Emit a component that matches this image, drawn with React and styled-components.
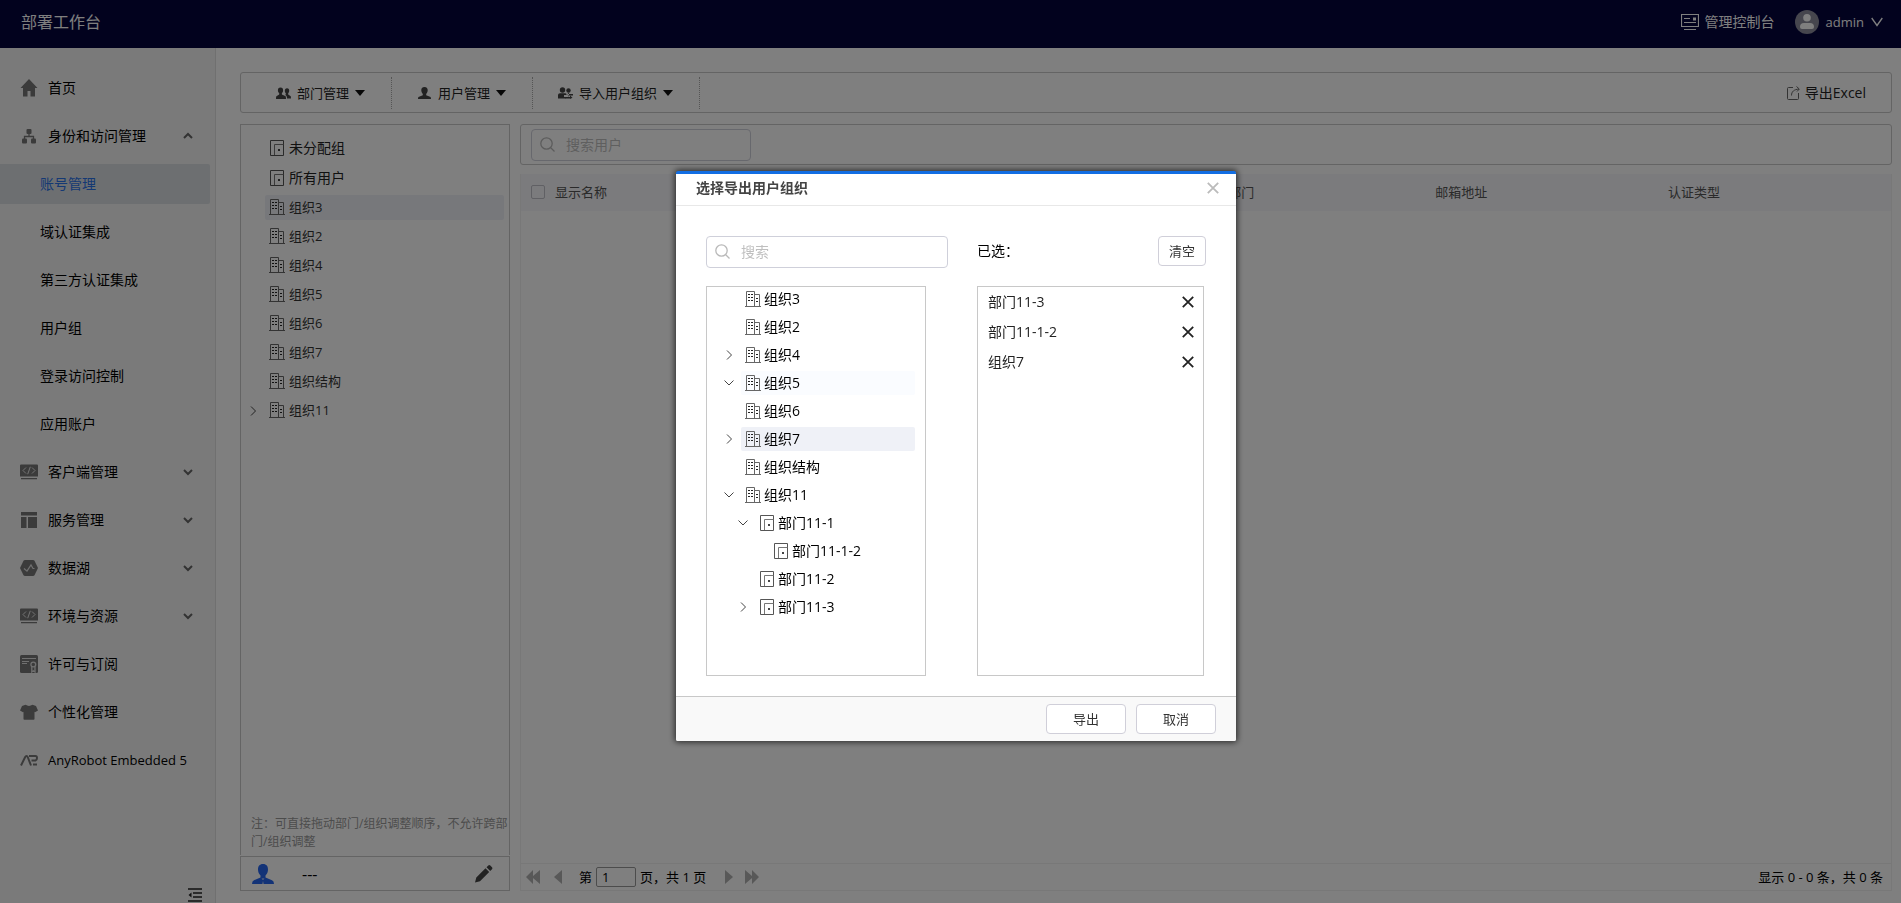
import React from "react";
import styled, { createGlobalStyle, css } from "styled-components";

const GlobalStyle = createGlobalStyle`
  *, *::before, *::after { box-sizing: border-box; }
  body {
    margin: 0;
    background: #fff;
    color: #000;
    font-family: "Open Sans", "Noto Sans CJK SC", sans-serif;
    font-size: 14px;
    line-height: 20px;
  }
  button, input { font: inherit; color: inherit; margin: 0; }
  button { padding: 0; border: 0; background: none; cursor: pointer; white-space: nowrap; }
  ul { list-style: none; margin: 0; padding: 0; }
  a { color: inherit; text-decoration: none; }
  svg { display: block; flex: none; }
`;

/* ---------- icons ---------- */

const BuildingIcon = () => (
  <svg width="16" height="16" viewBox="0 0 16 16" fill="none" stroke="#666">
    <path d="M1.500 15.500V.5h8v15M9.500 3.500h5v12M0 15.500h16" />
    <path d="M3 3.500h2M6 3.500h2M3 6.500h2M6 6.500h2M3 9.500h2M6 9.500h2M11 7.500h2M11 10.500h2" stroke="#222" />
  </svg>
);

const DoorIcon = () => (
  <svg width="16" height="16" viewBox="0 0 16 16" fill="none" stroke="#555">
    <path d="M1.500 .5h13v15h-13z" />
    <path d="M5.500 15V4.500h9" stroke="#777" />
    <rect x="9" y="9" width="2" height="2" fill="#444" stroke="none" />
  </svg>
);

const Arrow = ({ open }) => (
  <svg width="10" height="10" viewBox="0 0 10 10" fill="none" stroke="#444">
    <path d={open ? "M.5 2.500 5 7l4.500-4.500" : "M3 .5 7.500 5 3 9.500"} />
  </svg>
);

const MenuArrow = ({ up }) => (
  <svg width="10" height="8" viewBox="0 0 10 8" fill="none" stroke="#666" strokeWidth="2">
    <path d={up ? "M1 6l4-4 4 4" : "M1 2l4 4 4-4"} />
  </svg>
);

const Caret = () => (
  <svg width="10" height="6" viewBox="0 0 10 6">
    <path d="M0 0h10L5 6z" fill="#111" />
  </svg>
);

const SearchIcon = () => (
  <svg width="16" height="16" viewBox="0 0 16 16" fill="none" stroke="#b9b9b9" strokeWidth="1.300">
    <circle cx="6.500" cy="6.500" r="5.700" />
    <path d="M10.500 10.500l4 4" />
  </svg>
);

const CrossIcon = ({ color }) => (
  <svg width="12" height="12" viewBox="0 0 12 12" fill="none" stroke={color} strokeWidth="1.800">
    <path d="M.8.8l10.400 10.400M11.200.8.8 11.200" />
  </svg>
);

const HomeIcon = () => (
  <svg width="18" height="18" viewBox="0 0 18 18" fill="#777">
    <path d="M9 0 .5 9H3v8.500h4.500V12h3v5.500H15V9h2.500z" />
  </svg>
);

const TreeIcon = () => (
  <svg width="18" height="18" viewBox="0 0 18 18" fill="#777">
    <rect x="6.500" y="2" width="5" height="5" rx="1" />
    <rect x="2" y="11.500" width="5" height="5" rx="1" />
    <rect x="11" y="11.500" width="5" height="5" rx="1" />
    <path d="M9 6v3.500M4.500 12V9.500h9V12" fill="none" stroke="#777" strokeWidth="1.300" />
  </svg>
);

const CodeIcon = () => (
  <svg width="18" height="18" viewBox="0 0 18 18">
    <path d="M1 1.500h16a1 1 0 0 1 1 1v11H0v-11a1 1 0 0 1 1-1zM1 15h16v1.300H1z" fill="#777" />
    <path d="M6 4.500 3 7.500l3 3M12 4.500l3 3-3 3M10.300 3.800 7.700 11.200" fill="none" stroke="#e8e8e8" />
  </svg>
);

const LayoutIcon = () => (
  <svg width="18" height="18" viewBox="0 0 18 18" fill="#777">
    <path d="M1 1h16v3.500H1zM1 6h5.500v11H1zM8 6h9v11H8z" />
  </svg>
);

const LakeIcon = () => (
  <svg width="18" height="18" viewBox="0 0 18 18">
    <path d="M5 1h8q1 0 1.500.8L18 9l-3.500 7.200q-.5.8-1.500.8H5q-1 0-1.500-.8L0 9l3.500-7.200Q4 1 5 1z" fill="#777" />
    <path d="M4 9.500l3 2.700 4-6.200 2 3.500h1.500" fill="none" stroke="#e0e0e0" strokeWidth="1.200" />
  </svg>
);

const LicenseIcon = () => (
  <svg width="18" height="18" viewBox="0 0 18 18">
    <rect width="18" height="18" rx="1.500" fill="#777" />
    <path d="M2 3.500h14M2 6.500h7M2 8.500h5" stroke="#e0e0e0" />
    <circle cx="13.300" cy="9.500" r="2.400" fill="none" stroke="#e0e0e0" strokeWidth="1.300" />
    <path d="M11.800 11.500V17l1.600-1.200L15 17v-5.500" fill="none" stroke="#e0e0e0" strokeWidth="1.300" />
  </svg>
);

const ShirtIcon = () => (
  <svg width="18" height="18" viewBox="0 0 18 18" fill="#777">
    <path d="M5.500 1.800Q9 4 12.500 1.800L16 3l2 4.500-3 1.700-.5-.4V16q0 .8-.8.8H4.300q-.8 0-.8-.8V8.800l-.5.400L0 7.500 2 3z" />
  </svg>
);

const RobotIcon = () => (
  <svg width="18" height="18" viewBox="0 0 18 18" fill="none" stroke="#777" strokeWidth="2">
    <path d="M1 14.500 5.200 6q.5-1 1.300-1t1.200 1L11 14.500" />
    <path d="M9 5h6.500Q17 5 17 7t-1.500 2.500H11.500" />
    <path d="M13 13.500h4" />
  </svg>
);

const CollapseIcon = () => (
  <svg width="14" height="14" viewBox="0 0 14 14" fill="none" stroke="#222" strokeWidth="1.300">
    <path d="M0 1h14M5 5h9M5 9h9M0 13h14" />
    <path d="M3.500 4.500v5L.5 7z" fill="#222" stroke="none" />
  </svg>
);

const UserIcon = () => (
  <svg width="15" height="12" viewBox="0 0 15 12" fill="#444">
    <path d="M7.500 0c2.300 0 3.300 1.500 3.200 3.500-.1 1.600-.8 2.700-1.500 3.400v1.300L13 9.800c.8.400 1 1.100 1 2.200H1c0-1.100.2-1.800 1-2.200l3.800-1.600V6.900C5.100 6.200 4.400 5.100 4.300 3.500 4.200 1.500 5.200 0 7.500 0z" />
  </svg>
);

const UsersIcon = () => (
  <svg width="15" height="12" viewBox="0 0 15 12" fill="#444">
    <path d="M4.500.5c1.900 0 2.700 1.200 2.600 2.900 0 1.300-.6 2.100-1.200 2.700v1.500l3.300 1.500c.6.300.8.900.8 2.900H0c0-2 .2-2.600.8-2.900l2.400-1.500V6.100C2.500 5.500 2 4.700 1.900 3.400 1.900 1.700 2.600.5 4.500.5z" />
    <path d="M11 1.300c1.600 0 2.300 1 2.200 2.500 0 1.200-.5 1.900-1 2.400v1.300l2.200 1.400c.5.300.6 1 .6 2.600h-4c0-1.900-.4-2.900-2-3.700l.8-.4V6.200c-.6-.5-1-1.200-1-2.400C8.800 2.300 9.500 1.300 11 1.300z" />
  </svg>
);

const ImportIcon = () => (
  <svg width="15" height="12" viewBox="0 0 15 12" fill="#444">
    <circle cx="4.500" cy="3" r="2.700" />
    <path d="M0 11.500V8q0-1.800 2-1.800h5q1.500 0 1.500 1.300V8H6v2h2v1.500z" />
    <circle cx="10.500" cy="3.500" r="2.200" />
    <path d="M9.500 7h5.500v1.500H9.500zM7.500 10h5v1.500h-5zM11 5.500l-2 2.200 2 2zM12 8.500l2.500 2.300L12 12z" />
  </svg>
);

const ExportIcon = () => (
  <svg width="13" height="14" viewBox="0 0 13 14" fill="none" stroke="#666">
    <path d="M6 1.500H1.500q-1 0-1 1v10q0 1 1 1h9q1 0 1-1V7M4.500 9.500C4.500 5.500 7 3.500 12 3M9.500.5 12.300 3 10 5.500" />
  </svg>
);

const ConsoleIcon = () => (
  <svg width="18" height="16" viewBox="0 0 18 16" fill="none" stroke="#fff">
    <path d="M.5.500h17v12H.5z" strokeWidth="1.200" />
    <path d="M3 4.500h6M3 8.500h12M3 15.500h12" strokeWidth="1.200" />
    <path d="M12 3.500h3v3h-3z" fill="#fff" stroke="none" />
  </svg>
);

const AvatarIcon = () => (
  <svg width="24" height="24" viewBox="0 0 24 24">
    <circle cx="12" cy="12" r="12" fill="#8c8c9c" />
    <circle cx="12" cy="7.800" r="3.800" fill="#fff" />
    <path d="M5 17q0-4 4-4h6q4 0 4 4 0 2-2 2H7q-2 0-2-2z" fill="#fff" />
  </svg>
);

const ChevronDown = () => (
  <svg width="12" height="10" viewBox="0 0 12 10" fill="none" stroke="#fff" strokeWidth="1.300">
    <path d="M.7 1 6 8.500 11.300 1" />
  </svg>
);

const BlueUserIcon = () => (
  <svg width="22" height="20" viewBox="0 0 22 20">
    <path d="M11 0c3.500 0 5 2.300 5 5.500 0 2.500-1 4.600-2.500 6v2l6.500 2.700q2 .8 2 3.800H0q0-3 2-3.800l6.500-2.700v-2C7 10.100 6 8 6 5.500 6 2.300 7.500 0 11 0z" fill="#2766ee" />
    <path d="M9.500 14.500 11 16l1.500-1.500M10.300 20l.7-3 .7 3z" fill="#d8e0f5" />
  </svg>
);

const PencilIcon = () => (
  <svg width="18" height="18" viewBox="0 0 18 18" fill="#444">
    <path d="M0 17.500l1.300-5L10.500 3.300l3.700 3.700L5 16.200zM11.500 2.300 13.300.5q1-.8 2 0l1.700 1.700q.8 1 0 2L15.200 6z" />
  </svg>
);

const PageIcon = ({ double, forward }) => (
  <svg width={double ? 14 : 8} height="14" viewBox={double ? "0 0 14 14" : "0 0 8 14"} fill="#b0b0b0">
    {!double && <path d={forward ? "M0 0l8 7-8 7z" : "M8 0 0 7l8 7z"} />}
    {double && <path d={forward ? "M0 0l7 6V0l7 7-7 7V8l-7 6z" : "M14 0 7 6V0L0 7l7 7V8l7 6z"} />}
  </svg>
);

/* ---------- page frame ---------- */

const Page = styled.div`
  display: flex;
  flex-direction: column;
  min-height: 100vh;
`;

const TopBar = styled.header`
  display: flex;
  align-items: center;
  justify-content: space-between;
  height: 48px;
  padding: 0 18px 4px 21px;
  background: #04043c;
  color: #fff;
`;

const Brand = styled.h1`
  margin: 0;
  font-size: 16px;
  font-weight: 400;
`;

const TopLinks = styled.div`
  display: flex;
  align-items: center;
  gap: 20px;
`;

const TopLink = styled.a`
  display: flex;
  align-items: center;
  gap: 6px;
`;

const Account = styled.button`
  display: flex;
  align-items: center;
  gap: 7px;
  font-size: 13px;
`;

const Body = styled.div`
  display: flex;
  flex: 1;
`;

const Sidebar = styled.nav`
  display: flex;
  flex-direction: column;
  justify-content: space-between;
  flex: none;
  width: 216px;
  padding: 20px 5px 1px 0;
  border-right: 1px solid #e0e0e0;
  background: #f5f5f5;
`;

const MenuList = styled.div`
  display: flex;
  flex-direction: column;
  gap: 8px;
`;

const MenuLink = styled.a`
  display: flex;
  align-items: center;
  gap: 10px;
  height: 40px;
  padding: 0 17px 0 ${(p) => (p.$sub ? 40 : 20)}px;
  border-radius: 0 2px 2px 0;
  font-size: ${(p) => (p.$latin ? 13 : 14)}px;
  ${(p) => p.$active && css`background: #dbdee2; color: #2a72e8;`}
`;

const MenuLabel = styled.span`
  flex: 1;
  white-space: nowrap;
`;

const CollapseButton = styled.button`
  align-self: flex-end;
  margin-right: 8px;
`;

const Main = styled.main`
  display: flex;
  flex-direction: column;
  flex: 1;
  gap: 11px;
  min-width: 0;
  padding: 24px 9px 12px 24px;
`;

const Toolbar = styled.div`
  display: flex;
  align-items: center;
  height: 41px;
  padding-left: 10px;
  border: 1px solid #c8c8c8;
  border-radius: 3px;
`;

const ToolButton = styled.button`
  display: flex;
  align-items: center;
  gap: 6px;
  height: 32px;
  padding: 0 26px 0 25px;
  border-right: 1px dotted #aaa;
  font-size: 13px;
  color: #222;
`;

const ExportButton = styled.button`
  display: flex;
  align-items: center;
  gap: 5px;
  margin-left: auto;
  padding-right: 25px;
  color: #222;
`;

const Columns = styled.div`
  display: flex;
  flex: 1;
  gap: 10px;
`;

/* ---------- organisation panel ---------- */

const OrgPanel = styled.section`
  display: flex;
  flex-direction: column;
  flex: none;
  gap: 1px;
  width: 270px;
`;

const OrgBox = styled.div`
  display: flex;
  flex-direction: column;
  flex: 1;
  padding-top: 8px;
  border: 1px solid #c8c8c8;
  border-bottom: 0;
`;

const GroupRow = styled.li`
  display: flex;
  align-items: center;
  gap: 4px;
  height: 30px;
  padding-left: 28px;
  color: #222;
`;

const OrgList = styled.ul`
  display: flex;
  flex-direction: column;
  gap: 4px;
  padding: 2px 5px 0 7px;
`;

const TreeRow = styled.li`
  display: flex;
  align-items: center;
  height: ${(p) => (p.$compact ? 24 : 25)}px;
  padding-left: ${(p) => p.$level * 14}px;
`;

const Toggle = styled.span`
  flex: none;
  width: 17px;
`;

const NodeButton = styled.button`
  display: flex;
  align-items: center;
  flex: 1;
  gap: ${(p) => (p.$compact ? 3 : 4)}px;
  height: 100%;
  padding: 0 0 ${(p) => (p.$compact ? 0 : 1)}px 4px;
  border-radius: 2px;
  background: ${(p) => (p.$selected ? "#eff1f7" : p.$hover ? "#fafcff" : "none")};
  font-size: ${(p) => (p.$compact ? 14 : 13)}px;
  color: ${(p) => (p.$compact ? "#000" : "#333")};
`;

const Note = styled.p`
  margin: auto 0 0;
  padding: 0 0 4px 10px;
  font-size: 12px;
  line-height: 18px;
  color: #999;
`;

const OwnerBar = styled.div`
  display: flex;
  align-items: center;
  height: 35px;
  padding: 0 16px 0 11px;
  border: 1px solid #c8c8c8;
`;

const OwnerName = styled.span`
  flex: 1;
  padding-left: 28px;
  font-size: 16px;
`;

/* ---------- user panel ---------- */

const UserPanel = styled.section`
  display: flex;
  flex-direction: column;
  flex: 1;
  gap: 9px;
  min-width: 0;
`;

const FilterBar = styled.div`
  display: flex;
  height: 41px;
  padding: 4px 10px 3px;
  border: 1px solid #c8c8c8;
  border-radius: 3px;
`;

const SearchBox = styled.label`
  display: flex;
  align-items: center;
  gap: 10px;
  width: ${(p) => p.$width}px;
  height: 32px;
  padding: 0 8px;
  border: 1px solid #cfd0da;
  border-radius: 4px;
  background: #fff;
`;

const SearchInput = styled.input`
  flex: 1;
  min-width: 0;
  padding: 0;
  border: 0;
  outline: 0;
  background: none;
  &::placeholder { color: #bfbfbf; opacity: 1; }
`;

const TableBox = styled.div`
  display: flex;
  flex-direction: column;
  justify-content: space-between;
  flex: 1;
  border: 1px solid #f0f0f0;
  border-top: 0;
`;

const Table = styled.table`
  width: 100%;
  table-layout: fixed;
  border-collapse: collapse;
`;

const HeadCell = styled.th`
  width: ${(p) => p.$width || "auto"};
  height: 37px;
  padding: 0 0 2px 10px;
  background: #f6f6fa;
  font-size: 13px;
  font-weight: 400;
  text-align: left;
  color: #555;
`;

const Checkbox = styled.input`
  display: block;
  appearance: none;
  width: 14px;
  height: 14px;
  border: 1px solid #c0c0c8;
  border-radius: 2px;
`;

const Pager = styled.div`
  display: flex;
  align-items: center;
  height: 27px;
  padding: 0 8px 0 5px;
  border-top: 1px solid #f0f0f0;
  font-size: 13px;
`;

const PagerGroup = styled.div`
  display: flex;
  gap: ${(p) => p.$gap}px;
`;

const PageField = styled.label`
  display: flex;
  align-items: center;
  gap: 4px;
  margin: 0 19px 0 17px;
`;

const PageInput = styled.input`
  width: 40px;
  height: 20px;
  padding: 0 5px;
  border: 1px solid #999;
  border-radius: 2px;
  background: none;
`;

const Total = styled.span`
  margin-left: auto;
`;

/* ---------- dialog ---------- */

const Mask = styled.div`
  position: fixed;
  inset: 0;
  display: flex;
  align-items: center;
  justify-content: center;
  padding: 9px 0 0 11px;
  background: rgba(0, 0, 0, 0.5);
`;

const Dialog = styled.div`
  width: 560px;
  border-top: 3px solid #126ee3;
  border-radius: 2px;
  background: #fff;
  box-shadow: 0 0 6px 1px rgba(0, 0, 0, 0.7);
`;

const DialogHead = styled.div`
  display: flex;
  align-items: center;
  justify-content: space-between;
  height: 32px;
  padding: 0 17px 4px 20px;
  border-bottom: 1px solid #e8e8e8;
`;

const DialogTitle = styled.h2`
  margin: 0;
  font-size: 14px;
  font-weight: 600;
  color: #444;
`;

const DialogBody = styled.div`
  display: flex;
  gap: 29px;
  padding: 30px 30px 20px;
`;

const Side = styled.div`
  display: flex;
  flex-direction: column;
  gap: 18px;
  width: ${(p) => p.$width}px;
`;

const SideHead = styled.div`
  display: flex;
  justify-content: space-between;
  height: 32px;
  line-height: 30px;
`;

const ListBox = styled.ul`
  display: flex;
  flex-direction: column;
  gap: ${(p) => p.$gap || 0}px;
  width: ${(p) => p.$width}px;
  height: 390px;
  overflow: auto;
  border: 1px solid #c8c8c8;
`;

const PickerRow = styled(TreeRow)`
  margin: 0 10px 0 17px;
`;

const ChosenRow = styled.li`
  display: flex;
  align-items: center;
  justify-content: space-between;
  height: 30px;
  padding: 0 9px 0 10px;
  color: #222;
`;

const Button = styled.button`
  width: ${(p) => p.$width}px;
  height: 30px;
  border: 1px solid #d0cfd9;
  border-radius: 4px;
  background: #fff;
  font-size: 13px;
  line-height: 28px;
  color: #333;
`;

const DialogFoot = styled.div`
  display: flex;
  justify-content: flex-end;
  gap: 10px;
  padding: 7px 20px;
  border-top: 1px solid #c8c8c8;
  border-radius: 0 0 2px 2px;
  background: #f9f9f9;
`;

/* ---------- data ---------- */

const menu = [
  { label: "首页", Icon: HomeIcon },
  { label: "身份和访问管理", Icon: TreeIcon, arrow: "up" },
  { label: "账号管理", active: true },
  { label: "域认证集成" },
  { label: "第三方认证集成" },
  { label: "用户组" },
  { label: "登录访问控制" },
  { label: "应用账户" },
  { label: "客户端管理", Icon: CodeIcon, arrow: "down" },
  { label: "服务管理", Icon: LayoutIcon, arrow: "down" },
  { label: "数据湖", Icon: LakeIcon, arrow: "down" },
  { label: "环境与资源", Icon: CodeIcon, arrow: "down" },
  { label: "许可与订阅", Icon: LicenseIcon },
  { label: "个性化管理", Icon: ShirtIcon },
  { label: "AnyRobot Embedded 5", Icon: RobotIcon, latin: true },
];

const tools = [
  { label: "部门管理", Icon: UsersIcon },
  { label: "用户管理", Icon: UserIcon },
  { label: "导入用户组织", Icon: ImportIcon },
];

const orgs = [
  { label: "组织3", selected: true },
  { label: "组织2" },
  { label: "组织4" },
  { label: "组织5" },
  { label: "组织6" },
  { label: "组织7" },
  { label: "组织结构" },
  { label: "组织11", toggle: "closed" },
];

const picker = [
  { label: "组织3" },
  { label: "组织2" },
  { label: "组织4", toggle: "closed" },
  { label: "组织5", toggle: "open", hover: true },
  { label: "组织6" },
  { label: "组织7", toggle: "closed", selected: true },
  { label: "组织结构" },
  { label: "组织11", toggle: "open" },
  { label: "部门11-1", level: 1, toggle: "open" },
  { label: "部门11-1-2", level: 2 },
  { label: "部门11-2", level: 1 },
  { label: "部门11-3", level: 1, toggle: "closed" },
];

const chosen = ["部门11-3", "部门11-1-2", "组织7"];

function TreeNode({ node, compact, Row = TreeRow }) {
  const level = node.level || 0;
  return (
    <Row $level={level} $compact={compact}>
      <Toggle>{node.toggle && <Arrow open={node.toggle === "open"} />}</Toggle>
      <NodeButton type="button" $compact={compact} $selected={node.selected} $hover={node.hover}>
        {level > 0 ? <DoorIcon /> : <BuildingIcon />}
        {node.label}
      </NodeButton>
    </Row>
  );
}

export default function App() {
  return (
    <>
      <GlobalStyle />
      <Page>
        <TopBar>
          <Brand>部署工作台</Brand>
          <TopLinks>
            <TopLink href="#console"><ConsoleIcon />管理控制台</TopLink>
            <Account type="button"><AvatarIcon />admin<ChevronDown /></Account>
          </TopLinks>
        </TopBar>
        <Body>
          <Sidebar>
            <MenuList>
              {menu.map(({ label, Icon, arrow, active, latin }) => (
                <MenuLink key={label} href="#menu" $sub={!Icon} $active={active} $latin={latin}>
                  {Icon && <Icon />}
                  <MenuLabel>{label}</MenuLabel>
                  {arrow && <MenuArrow up={arrow === "up"} />}
                </MenuLink>
              ))}
            </MenuList>
            <CollapseButton type="button" aria-label="收起"><CollapseIcon /></CollapseButton>
          </Sidebar>
          <Main>
            <Toolbar>
              {tools.map(({ label, Icon }) => (
                <ToolButton key={label} type="button"><Icon />{label}<Caret /></ToolButton>
              ))}
              <ExportButton type="button"><ExportIcon />导出Excel</ExportButton>
            </Toolbar>
            <Columns>
              <OrgPanel>
                <OrgBox>
                  <ul>
                    <GroupRow><DoorIcon />未分配组</GroupRow>
                    <GroupRow><DoorIcon />所有用户</GroupRow>
                  </ul>
                  <OrgList>
                    {orgs.map((o) => <TreeNode key={o.label} node={o} />)}
                  </OrgList>
                  <Note>注：可直接拖动部门/组织调整顺序，不允许跨部门/组织调整</Note>
                </OrgBox>
                <OwnerBar>
                  <BlueUserIcon />
                  <OwnerName>---</OwnerName>
                  <button type="button" aria-label="编辑"><PencilIcon /></button>
                </OwnerBar>
              </OrgPanel>
              <UserPanel>
                <FilterBar>
                  <SearchBox $width={220}>
                    <SearchIcon />
                    <SearchInput placeholder="搜索用户" aria-label="搜索用户" />
                  </SearchBox>
                </FilterBar>
                <TableBox>
                  <Table>
                    <thead>
                      <tr>
                        <HeadCell $width="24px"><Checkbox type="checkbox" aria-label="全选" /></HeadCell>
                        <HeadCell>显示名称</HeadCell>
                        <HeadCell $width="17%" />
                        <HeadCell $width="17%">直属部门</HeadCell>
                        <HeadCell $width="17%">邮箱地址</HeadCell>
                        <HeadCell $width="17%">认证类型</HeadCell>
                      </tr>
                    </thead>
                  </Table>
                  <Pager>
                    <PagerGroup $gap={14}>
                      <button type="button" aria-label="首页"><PageIcon double /></button>
                      <button type="button" aria-label="上一页"><PageIcon /></button>
                    </PagerGroup>
                    <PageField>
                      第
                      <PageInput defaultValue="1" />
                      页，共 1 页
                    </PageField>
                    <PagerGroup $gap={12}>
                      <button type="button" aria-label="下一页"><PageIcon forward /></button>
                      <button type="button" aria-label="末页"><PageIcon double forward /></button>
                    </PagerGroup>
                    <Total>显示 0 - 0 条，共 0 条</Total>
                  </Pager>
                </TableBox>
              </UserPanel>
            </Columns>
          </Main>
        </Body>
      </Page>
      <Mask>
        <Dialog role="dialog" aria-modal="true" aria-labelledby="export-title">
          <DialogHead>
            <DialogTitle id="export-title">选择导出用户组织</DialogTitle>
            <button type="button" aria-label="关闭"><CrossIcon color="#bbb" /></button>
          </DialogHead>
          <DialogBody>
            <Side $width={242}>
              <SearchBox $width={242}>
                <SearchIcon />
                <SearchInput placeholder="搜索" aria-label="搜索" />
              </SearchBox>
              <ListBox $width={220} $gap={4}>
                {picker.map((n) => <TreeNode key={n.label} node={n} compact Row={PickerRow} />)}
              </ListBox>
            </Side>
            <Side $width={229}>
              <SideHead>
                已选：
                <Button type="button" $width={48}>清空</Button>
              </SideHead>
              <ListBox $width={227}>
                {chosen.map((c) => (
                  <ChosenRow key={c}>
                    {c}
                    <button type="button" aria-label={`移除${c}`}><CrossIcon color="#222" /></button>
                  </ChosenRow>
                ))}
              </ListBox>
            </Side>
          </DialogBody>
          <DialogFoot>
            <Button type="button" $width={80}>导出</Button>
            <Button type="button" $width={80}>取消</Button>
          </DialogFoot>
        </Dialog>
      </Mask>
    </>
  );
}
